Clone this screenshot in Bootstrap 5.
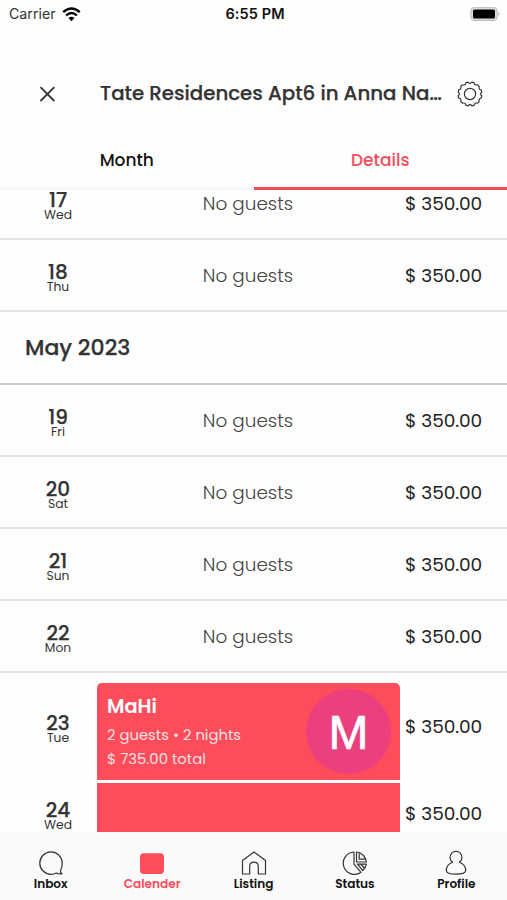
<!DOCTYPE html>
<html lang="en">
<head>
<meta charset="utf-8">
<meta name="viewport" content="width=device-width, initial-scale=1">
<title>Calender details</title>
<link href="https://cdn.jsdelivr.net/npm/bootstrap@5.3.0/dist/css/bootstrap.min.css" rel="stylesheet">
<style>
:root{--coral:#fd4c5a}
body{font-family:Poppins,Inter,"Open Sans",sans-serif;background:#fefefe;color:#333;line-height:1}
.phone{height:900px;overflow:hidden}
.status-bar{height:28px;padding:0 6px 0 9px;color:#111;font-family:Inter,sans-serif}
.status-bar>*{flex:1 1 0}
.carrier{font-size:14.2px;color:#333}
.wifi{margin-left:6px}
.clock{font-size:14.5px;font-weight:600;letter-spacing:.1px}
.head{height:102px;padding:30px 23px 0 38px}
.head-title{font-size:19.8px;font-weight:500;-webkit-text-stroke:.25px;width:342px;margin-left:43px;white-space:nowrap}
.tab-strip{height:60px;font-size:17px;font-weight:500}
.tab-strip a{border-bottom:3px solid #f7f7f7;color:#111;text-decoration:none;padding-top:3px}
.tab-strip a.active{border-color:#f04c5a;color:#f04c5a}
.days{height:642px}
.day-list{margin-top:-22px}
.day-row{height:72px;flex:none;padding:2px 25px 0 0;border-bottom:2px solid #e4e4e4}
.day-date{width:116px;padding-top:4px}
.num{font-size:20px;font-weight:500;-webkit-text-stroke:.25px;line-height:17px}
.dow{font-size:12.3px;line-height:12px;color:#333}
.none{font-size:18.4px;font-weight:300;width:264px;color:#444}
.price{font-size:18.5px;color:#222;white-space:nowrap;letter-spacing:-.1px}
.month-row{height:73px;flex:none;padding-left:25px;font-size:22px;font-weight:500;-webkit-text-stroke:.25px;border-bottom:2px solid #c9c9c9}
.busy{flex:none;padding-right:25px}
.busy .day-date{width:97px;padding-left:19px;padding-top:5px}
.busy .price{padding-top:2px}
.busy-next{height:67px}
.stay{width:303px;background:var(--coral);color:#fff}
.stay-main{height:97px;margin-top:10px;border-radius:5px 5px 0 0;padding:0 9px 0 10px}
.guest{font-size:19.4px;font-weight:600;line-height:26px;padding-bottom:3px;padding-top:2px}
.info{font-size:14.8px;line-height:24.5px;color:#ffe1e3;white-space:nowrap}
.face{width:85px;height:85px;background:#ec407e;font-family:"Liberation Sans",Arial,sans-serif;font-size:48px;-webkit-text-stroke:.7px;padding-top:2px}
.dock{height:68px;background:#fafafa;font-size:12.1px;font-weight:600}
.dock a{flex:1 1 0;color:#111;text-decoration:none;padding-top:18px;gap:2px}
.dock a.active{color:var(--coral)}
svg{display:block;flex:none}
.ln{fill:none;stroke:#333;stroke-width:1.2;stroke-linejoin:round;stroke-linecap:round}
.ln.bold{stroke-width:1.8}
</style>
</head>
<body>
<div class="phone d-flex flex-column">
  <div class="status-bar d-flex align-items-center">
    <div class="d-flex align-items-center"><span class="carrier">Carrier</span>
      <svg class="wifi" width="19" height="15" viewBox="0 0 19 15"><g fill="none" stroke="#000" stroke-width="2.4"><path d="M1.2 5.2Q9.5-2.2 17.8 5.2"/><path d="M4.1 8.5Q9.5 3.4 14.9 8.5"/></g><path d="M9.5 14.2 6.5 11.1Q9.5 8.6 12.5 11.1Z"/></svg></div>
    <div class="clock text-center">6:55 PM</div>
    <div class="d-flex justify-content-end"><svg width="31" height="15" viewBox="0 0 31 15"><rect x=".8" y=".3" width="26.4" height="13.2" rx="4" fill="#ddd" stroke="#bbb"/><rect x="3" y="2.5" width="22" height="9" rx="1.5"/><path d="M28.6 4.5q2 2.4 0 4.8z" fill="#aaa"/></svg></div>
  </div>
  <header class="head d-flex align-items-center">
    <svg width="19" height="19" viewBox="0 0 19 19"><path class="ln bold" d="M3 2.7 15.8 15.5M15.8 2.7 3 15.5"/></svg>
    <h1 class="head-title mb-0">Tate Residences Apt6 in Anna Na…</h1>
    <svg class="ms-auto" width="28" height="28" viewBox="-14 -14 28 28"><circle class="ln" r="5.6"/><path class="ln" d="M-2-11.8Q0-9.5 2-11.8L4.2-11.2Q4.6-8.3 7.6-9.2L9.2-7.6Q8.3-4.6 11.2-4.2L11.8-2Q9.5 0 11.8 2L11.2 4.2Q8.3 4.6 9.2 7.6L7.6 9.2Q4.6 8.3 4.2 11.2L2 11.8Q0 9.5-2 11.8L-4.2 11.2Q-4.6 8.3-7.6 9.2L-9.2 7.6Q-8.3 4.6-11.2 4.2L-11.8 2Q-9.5 0-11.8-2L-11.2-4.2Q-8.3-4.6-9.2-7.6L-7.6-9.2Q-4.6-8.3-4.2-11.2Z"/></svg>
  </header>
  <nav class="tab-strip d-flex">
    <a class="w-50 d-flex align-items-center justify-content-center" href="#">Month</a>
    <a class="w-50 d-flex align-items-center justify-content-center active" href="#">Details</a>
  </nav>
  <main class="days overflow-hidden">
    <div class="day-list d-flex flex-column">
      <div class="day-row d-flex align-items-center"><div class="day-date text-center"><div class="num">17</div><div class="dow">Wed</div></div><div class="none text-center">No guests</div><div class="price ms-auto">$ 350.00</div></div>
      <div class="day-row d-flex align-items-center"><div class="day-date text-center"><div class="num">18</div><div class="dow">Thu</div></div><div class="none text-center">No guests</div><div class="price ms-auto">$ 350.00</div></div>
      <div class="month-row d-flex align-items-center">May 2023</div>
      <div class="day-row d-flex align-items-center"><div class="day-date text-center"><div class="num">19</div><div class="dow">Fri</div></div><div class="none text-center">No guests</div><div class="price ms-auto">$ 350.00</div></div>
      <div class="day-row d-flex align-items-center"><div class="day-date text-center"><div class="num">20</div><div class="dow">Sat</div></div><div class="none text-center">No guests</div><div class="price ms-auto">$ 350.00</div></div>
      <div class="day-row d-flex align-items-center"><div class="day-date text-center"><div class="num">21</div><div class="dow">Sun</div></div><div class="none text-center">No guests</div><div class="price ms-auto">$ 350.00</div></div>
      <div class="day-row d-flex align-items-center"><div class="day-date text-center"><div class="num">22</div><div class="dow">Mon</div></div><div class="none text-center">No guests</div><div class="price ms-auto">$ 350.00</div></div>
      <div class="busy d-flex align-items-center"><div class="day-date text-center"><div class="num">23</div><div class="dow">Tue</div></div>
        <div class="stay stay-main d-flex align-items-center justify-content-between"><div><div class="guest">MaHi</div><div class="info">2 guests • 2 nights</div><div class="info">$ 735.00 total</div></div><div class="face rounded-circle d-flex align-items-center justify-content-center">M</div></div>
        <div class="price ms-auto">$ 350.00</div></div>
      <div class="busy busy-next d-flex align-items-center"><div class="day-date text-center"><div class="num">24</div><div class="dow">Wed</div></div><div class="stay h-100 border-top border-3 border-white"></div><div class="price ms-auto">$ 350.00</div></div>
    </div>
  </main>
  <footer class="dock d-flex text-center">
    <a class="d-flex flex-column align-items-center" href="#"><svg width="26" height="26" viewBox="0 0 26 26"><path class="ln" d="M22.5 20.5Q24.4 17.4 24.2 13A11.2 11.2 0 1 0 13 24.3Q16.5 24.3 18.2 22.9Q20.5 24.3 24 23.8Q22.2 22.8 22.5 20.5Z"/></svg>Inbox</a>
    <a class="d-flex flex-column align-items-center active" href="#"><svg width="26" height="26" viewBox="0 0 26 26"><rect x="1" y="3.3" width="24" height="20.7" rx="4" fill="currentColor"/></svg>Calender</a>
    <a class="d-flex flex-column align-items-center" href="#"><svg width="26" height="26" viewBox="0 0 26 26"><path class="ln" d="M1.5 24V10.4L13 2 24.5 10.4V24H17.3V16.5Q17.3 12.2 13 12.2T8.7 16.5V24Z"/></svg>Listing</a>
    <a class="d-flex flex-column align-items-center" href="#"><svg width="26" height="26" viewBox="0 0 26 26"><path class="ln" d="M12 2A11.2 11.2 0 1 0 19 22.3L12 14.2ZM14.5 2V12H24.4A11 11 0 0 0 14.5 2ZM17.2 2.8V9.2H23.4M15.5 14.2H24.3Q23.7 18 20.8 20.5ZM19 14.5 22.5 18"/></svg>Status</a>
    <a class="d-flex flex-column align-items-center" href="#"><svg width="26" height="26" viewBox="0 0 26 26"><path class="ln" d="M9.6 12.2A6 6 0 1 1 16.4 12.2C20.5 13.6 22.7 17.2 22.7 20.6Q22.7 24.2 13 24.2T3.3 20.6C3.3 17.2 5.5 13.6 9.6 12.2Z"/></svg>Profile</a>
  </footer>
</div>
<script src="https://cdn.jsdelivr.net/npm/bootstrap@5.3.0/dist/js/bootstrap.bundle.min.js"></script>
</body>
</html>
